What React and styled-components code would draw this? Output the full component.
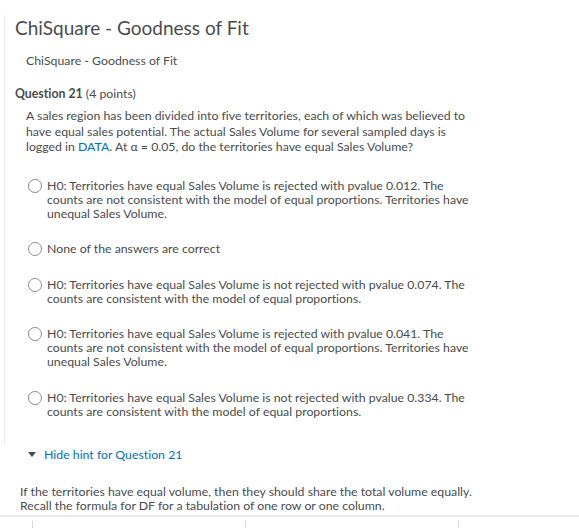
import React from "react";
import styled, { createGlobalStyle } from "styled-components";

const GlobalStyle = createGlobalStyle`
  body {
    margin: 0;
    background: #ffffff;
    font-family: Lato, "Open Sans", sans-serif;
    font-variant-ligatures: none;
    color: #494c4e;
  }
`;

const Page = styled.div`
  width: 579px;
  height: 528px;
  overflow: hidden;
  display: flex;
  flex-direction: column;
`;

const Panel = styled.div`
  margin: 15px 0 0 4px;
  border-left: 1px solid #ececec;
  padding: 0 0 26px 10px;
`;

const Title = styled.h1`
  margin: 0;
  font-size: 19px;
  font-weight: 400;
  line-height: 26px;
  color: #494c4e;
`;

const SubTitle = styled.div`
  margin: 13px 0 0 11px;
  font-size: 12.3px;
  line-height: 14px;
`;

const QuestionHead = styled.div`
  margin-top: 18px;
  font-size: 12.3px;
  line-height: 15px;
  b {
    font-weight: 700;
  }
`;

const Prompt = styled.p`
  margin: 7px 0 0 11px;
  font-size: 12.3px;
  line-height: 15.5px;
  white-space: nowrap;
`;

const Link = styled.span`
  color: #006fbf;
`;

const Options = styled.div`
  margin: 24px 0 0 13px;
  display: flex;
  flex-direction: column;
  gap: 21.5px;
`;

const Option = styled.label`
  display: flex;
  align-items: flex-start;
  gap: 5px;
  font-size: 12.3px;
  line-height: 14px;
  white-space: nowrap;
`;

const Radio = styled.span`
  flex: none;
  width: 12px;
  height: 12px;
  border: 1px solid #8a8c8e;
  border-radius: 50%;
  background: #fff;
`;

const HintToggle = styled.div`
  display: flex;
  align-items: center;
  gap: 8px;
  margin: 3px 0 0 28px;
  font-size: 12.3px;
  line-height: 14px;
  color: #006fbf;
`;

const Caret = styled.span`
  width: 0;
  height: 0;
  border-left: 4.5px solid transparent;
  border-right: 4.5px solid transparent;
  border-top: 5px solid #494c4e;
`;

const HintText = styled.p`
  margin: 23px 0 0 20px;
  font-size: 12.3px;
  line-height: 14px;
  white-space: nowrap;
`;

const Footer = styled.div`
  margin-top: 2px;
  border-top: 2px solid #ebebeb;
  display: grid;
  grid-template-columns: 213px 213px 1fr;
  padding: 4px 0 0 32px;
  height: 20px;
`;

const Tick = styled.div`
  border-left: 1px solid #d6d6d6;
`;

const options = [
  [
    "H0: Territories have equal Sales Volume is rejected with pvalue 0.012. The",
    "counts are not consistent with the model of equal proportions. Territories have",
    "unequal Sales Volume.",
  ],
  ["None of the answers are correct"],
  [
    "H0: Territories have equal Sales Volume is not rejected with pvalue 0.074. The",
    "counts are consistent with the model of equal proportions.",
  ],
  [
    "H0: Territories have equal Sales Volume is rejected with pvalue 0.041. The",
    "counts are not consistent with the model of equal proportions. Territories have",
    "unequal Sales Volume.",
  ],
  [
    "H0: Territories have equal Sales Volume is not rejected with pvalue 0.334. The",
    "counts are consistent with the model of equal proportions.",
  ],
];

const Lines = ({ lines }) =>
  lines.map((line, i) => (
    <React.Fragment key={i}>
      {i > 0 && <br />}
      {line}
    </React.Fragment>
  ));

export default function App() {
  return (
    <Page>
      <GlobalStyle />
      <Panel>
        <Title>ChiSquare - Goodness of Fit</Title>
        <SubTitle>ChiSquare - Goodness of Fit</SubTitle>
        <QuestionHead>
          <b>Question 21</b> (4 points)
        </QuestionHead>
        <Prompt>
          A sales region has been divided into five territories, each of which
          was believed to
          <br />
          have equal sales potential. The actual Sales Volume for several
          sampled days is
          <br />
          logged in <Link>DATA</Link>. At α = 0.05, do the territories have
          equal Sales Volume?
        </Prompt>
        <Options>
          {options.map((lines, i) => (
            <Option key={i}>
              <Radio />
              <span>
                <Lines lines={lines} />
              </span>
            </Option>
          ))}
        </Options>
      </Panel>
      <HintToggle>
        <Caret />
        Hide hint for Question 21
      </HintToggle>
      <HintText>
        If the territories have equal volume, then they should share the total
        volume equally.
        <br />
        Recall the formula for DF for a tabulation of one row or one column.
      </HintText>
      <Footer>
        <Tick />
        <Tick />
        <Tick />
      </Footer>
    </Page>
  );
}
